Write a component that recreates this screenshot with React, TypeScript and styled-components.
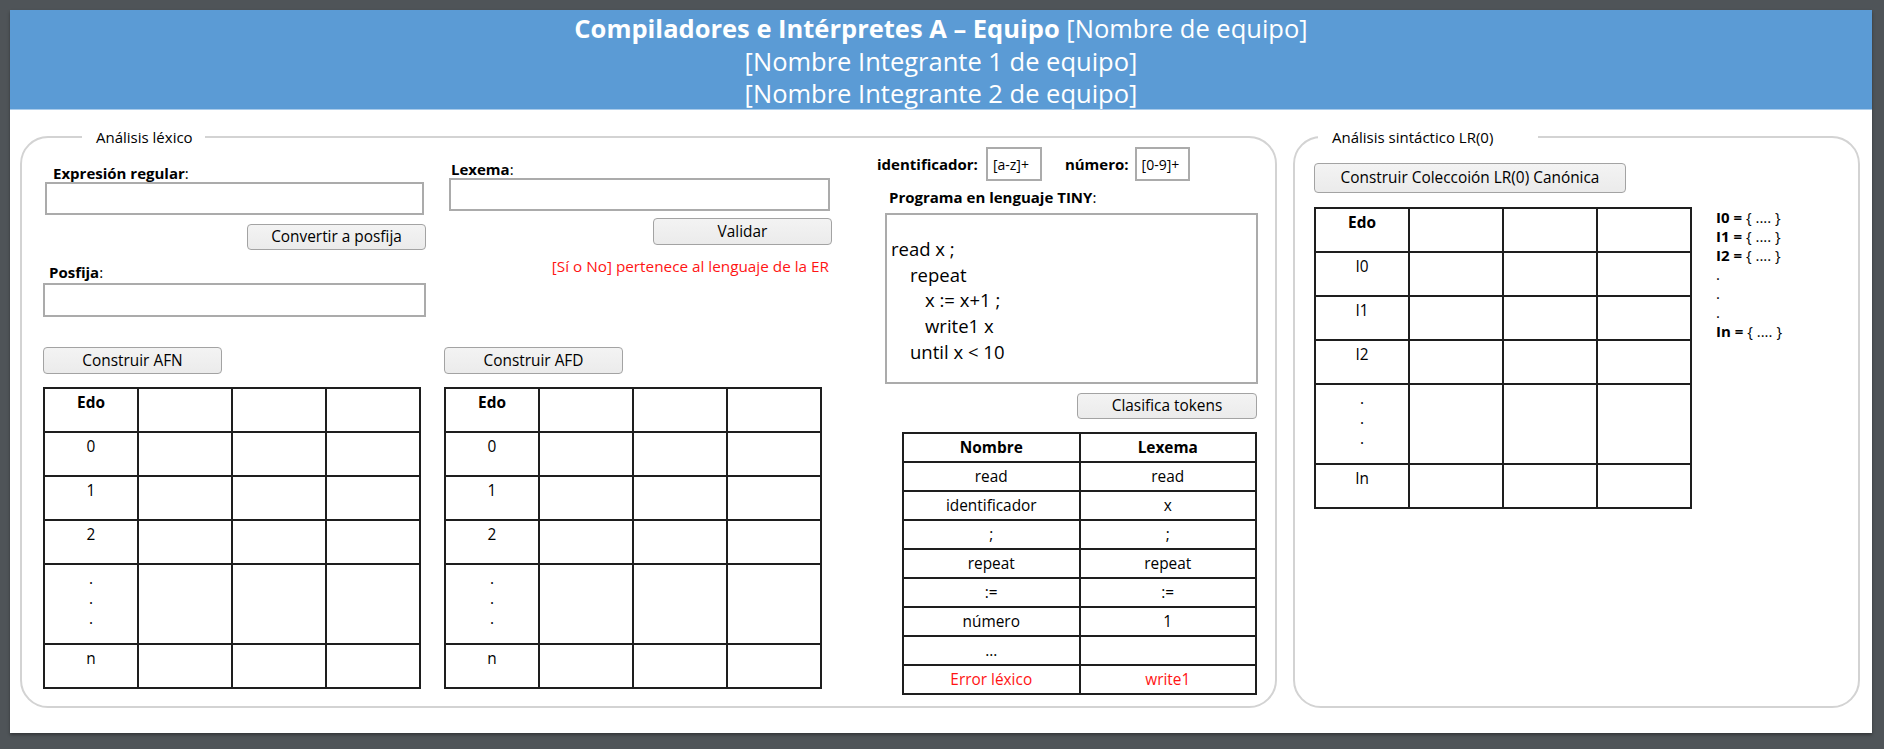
import React from "react";
import styled, { createGlobalStyle } from "styled-components";

const GlobalStyle = createGlobalStyle`
  html, body {
    margin: 0;
    padding: 0;
    overflow: hidden;
  }
  body {
    background: #4f5458;
    font-family: "Open Sans", "Noto Sans", sans-serif;
    color: #000;
  }
`;

const Screen = styled.div`
  padding: 10px 12px 16px 10px;
`;

const Page = styled.div`
  background: #fff;
  height: 723px;
  display: flex;
  flex-direction: column;
  box-shadow: 0 2px 3px rgba(0, 0, 0, 0.35);
`;

const Header = styled.header`
  box-sizing: border-box;
  height: 100px;
  padding-top: 2px;
  background: #5b9bd5;
  border-bottom: 1px solid #a9cbea;
  color: #fff;
  text-align: center;
  font-size: 25.5px;
  line-height: 32.5px;
`;

const HeaderLine = styled.div`
  white-space: nowrap;
`;

const Main = styled.main`
  flex: 1;
  display: flex;
  gap: 16px;
  padding: 18px 12px 25px 10px;
  min-height: 0;
`;

const Panel = styled.fieldset<{ $width?: number }>`
  margin: 0;
  padding: 0;
  min-width: 0;
  border: 2px solid #d3d3d3;
  border-radius: 28px;
  flex: ${(p) => (p.$width ? `0 0 ${p.$width}px` : "1 1 auto")};
  box-sizing: border-box;
`;

const Legend = styled.legend<{ $offset: number; $padRight: number }>`
  margin-left: ${(p) => p.$offset}px;
  padding: 0 ${(p) => p.$padRight}px 0 14px;
  font-size: 15px;
  line-height: 18px;
`;

const LexBody = styled.div`
  display: flex;
  padding: 0 17px 0 21px;
`;

const Column = styled.div<{ $width: number; $gap?: number }>`
  flex: 0 0 ${(p) => p.$width}px;
  margin-left: ${(p) => p.$gap ?? 0}px;
  display: flex;
  flex-direction: column;
`;

const FormArea = styled.div<{ $pad: number }>`
  box-sizing: border-box;
  height: 201px;
  padding-top: ${(p) => p.$pad}px;
  display: flex;
  flex-direction: column;
`;

const FieldLabel = styled.label<{ $indent: number; $space?: number }>`
  display: block;
  font-size: 15px;
  line-height: 18px;
  padding-left: ${(p) => p.$indent}px;
  margin-top: ${(p) => p.$space ?? 0}px;
  white-space: nowrap;
  b {
    font-weight: 700;
  }
`;

const TextInput = styled.input<{ $h: number; $inset?: number; $space?: number }>`
  box-sizing: border-box;
  display: block;
  height: ${(p) => p.$h}px;
  width: ${(p) => (p.$inset ? `calc(100% - ${p.$inset + 2}px)` : "100%")};
  margin: ${(p) => p.$space ?? 0}px 0 0 ${(p) => p.$inset ?? 0}px;
  border: 2px solid #ababab;
  background: #fff;
  font-family: inherit;
  font-size: 15px;
  padding: 0 6px;
  outline: none;
`;

const ActionButton = styled.button<{
  $w: number;
  $h: number;
  $space?: number;
  $end?: boolean;
  $right?: number;
}>`
  box-sizing: border-box;
  width: ${(p) => p.$w}px;
  height: ${(p) => p.$h}px;
  margin-top: ${(p) => p.$space ?? 0}px;
  margin-right: ${(p) => p.$right ?? 0}px;
  align-self: ${(p) => (p.$end ? "flex-end" : "flex-start")};
  border: 1px solid #a3a3a3;
  border-radius: 4px;
  background: linear-gradient(#f3f3f3, #ebebeb);
  font-family: inherit;
  font-size: 15.4px;
  line-height: 18px;
  color: #000;
  padding: 0;
  cursor: pointer;
`;

const ResultText = styled.div`
  margin-top: 12px;
  padding-right: 3px;
  text-align: right;
  color: #ff1414;
  font-size: 15.3px;
  line-height: 18px;
  white-space: nowrap;
`;

const StateTable = styled.table<{ $space?: number }>`
  border-collapse: collapse;
  table-layout: fixed;
  width: 378px;
  margin-top: ${(p) => p.$space ?? 0}px;
  flex: none;
`;

const StateRow = styled.tr<{ $h: number }>`
  height: ${(p) => p.$h}px;
`;

const StateCell = styled.td<{ $bold?: boolean }>`
  border: 2px solid #1e1e1e;
  text-align: center;
  vertical-align: top;
  padding: 4px 0 0;
  font-size: 15.4px;
  line-height: 20px;
  font-weight: ${(p) => (p.$bold ? 700 : 400)};
`;

const RegexRow = styled.div`
  display: flex;
  align-items: center;
  height: 34px;
  margin-top: 1px;
`;

const RegexLabel = styled.span<{ $space?: number }>`
  font-weight: 700;
  font-size: 15px;
  margin-left: ${(p) => p.$space ?? 0}px;
  white-space: nowrap;
`;

const RegexBox = styled.span<{ $w: number; $space: number }>`
  box-sizing: border-box;
  width: ${(p) => p.$w}px;
  height: 34px;
  margin-left: ${(p) => p.$space}px;
  border: 2px solid #ababab;
  padding-left: 5px;
  display: flex;
  align-items: center;
  font-size: 14px;
  white-space: nowrap;
`;

const CodeBox = styled.div`
  box-sizing: border-box;
  margin: 7px 0 0 8px;
  height: 171px;
  border: 2px solid #ababab;
  padding: 21px 4px 0;
  font-size: 18.5px;
  line-height: 25.7px;
`;

const CodeLine = styled.div<{ $indent: number }>`
  padding-left: ${(p) => p.$indent}px;
  white-space: pre;
`;

const TokenTable = styled.table`
  border-collapse: collapse;
  table-layout: fixed;
  width: 355px;
  margin-top: 13px;
  margin-right: 1px;
  align-self: flex-end;
`;

const TokenRow = styled.tr`
  height: 29px;
`;

const TokenCell = styled.td<{ $bold?: boolean; $error?: boolean }>`
  border: 2px solid #1e1e1e;
  text-align: center;
  vertical-align: middle;
  padding: 0;
  font-size: 15.4px;
  line-height: 20px;
  font-weight: ${(p) => (p.$bold ? 700 : 400)};
  color: ${(p) => (p.$error ? "#ff1414" : "#000")};
`;

const SynBody = styled.div`
  display: flex;
  flex-direction: column;
  padding-left: 19px;
`;

const SynRow = styled.div`
  display: flex;
  align-items: flex-start;
  gap: 24px;
  margin-top: 14px;
`;

const SetList = styled.div`
  font-size: 15px;
  line-height: 19px;
  padding-top: 1px;
  white-space: nowrap;
  b {
    font-weight: 700;
  }
`;

const stateRows = ["0", "1", "2", "dots", "n"];
const lrRows = ["I0", "I1", "I2", "dots", "In"];

function EdoTable({ rows, space }: { rows: string[]; space?: number }) {
  return (
    <StateTable $space={space}>
      <tbody>
        <StateRow $h={44}>
          <StateCell $bold>Edo</StateCell>
          <StateCell />
          <StateCell />
          <StateCell />
        </StateRow>
        {rows.map((r, i) => (
          <StateRow key={i} $h={r === "dots" ? 80 : 44}>
            <StateCell>
              {r === "dots" ? (
                <>
                  .<br />.<br />.
                </>
              ) : (
                r
              )}
            </StateCell>
            <StateCell />
            <StateCell />
            <StateCell />
          </StateRow>
        ))}
      </tbody>
    </StateTable>
  );
}

const tokens: { name: string; lex: string; error?: boolean }[] = [
  { name: "read", lex: "read" },
  { name: "identificador", lex: "x" },
  { name: ";", lex: ";" },
  { name: "repeat", lex: "repeat" },
  { name: ":=", lex: ":=" },
  { name: "número", lex: "1" },
  { name: "...", lex: "" },
  { name: "Error léxico", lex: "write1", error: true },
];

const code: { text: string; indent: number }[] = [
  { text: "read x ;", indent: 0 },
  { text: "repeat", indent: 19 },
  { text: "x := x+1 ;", indent: 34 },
  { text: "write1 x", indent: 34 },
  { text: "until x < 10", indent: 19 },
];

const sets = ["I0", "I1", "I2", ".", ".", ".", "In"];

export default function App() {
  return (
    <>
      <GlobalStyle />
      <Screen>
        <Page>
          <Header>
            <HeaderLine>
              <b>Compiladores e Intérpretes A – Equipo</b> [Nombre de equipo]
            </HeaderLine>
            <HeaderLine>[Nombre Integrante 1 de equipo]</HeaderLine>
            <HeaderLine>[Nombre Integrante 2 de equipo]</HeaderLine>
          </Header>
          <Main>
            <Panel $width={1257}>
              <Legend $offset={60} $padRight={12}>
                Análisis léxico
              </Legend>
              <LexBody>
                <Column $width={383}>
                  <FormArea $pad={18}>
                    <FieldLabel $indent={10}>
                      <b>Expresión regular</b>:
                    </FieldLabel>
                    <TextInput $h={33} $inset={2} />
                    <ActionButton $w={179} $h={26} $space={9} $end>
                      Convertir a posfija
                    </ActionButton>
                    <FieldLabel $indent={6} $space={13}>
                      <b>Posfija</b>:
                    </FieldLabel>
                    <TextInput $h={34} $space={2} />
                  </FormArea>
                  <ActionButton $w={179} $h={27}>
                    Construir AFN
                  </ActionButton>
                  <EdoTable rows={stateRows} space={13} />
                </Column>
                <Column $width={388} $gap={18}>
                  <FormArea $pad={14}>
                    <FieldLabel $indent={7}>
                      <b>Lexema</b>:
                    </FieldLabel>
                    <TextInput $h={33} $inset={5} />
                    <ActionButton $w={179} $h={27} $space={7} $end>
                      Validar
                    </ActionButton>
                    <ResultText>[Sí o No] pertenece al lenguaje de la ER</ResultText>
                  </FormArea>
                  <ActionButton $w={179} $h={27}>
                    Construir AFD
                  </ActionButton>
                  <EdoTable rows={stateRows} space={13} />
                </Column>
                <Column $width={381} $gap={45}>
                  <RegexRow>
                    <RegexLabel>identificador:</RegexLabel>
                    <RegexBox $w={56} $space={8}>
                      [a-z]+
                    </RegexBox>
                    <RegexLabel $space={23}>número:</RegexLabel>
                    <RegexBox $w={55} $space={6}>
                      [0-9]+
                    </RegexBox>
                  </RegexRow>
                  <FieldLabel $indent={12} $space={7}>
                    <b>Programa en lenguaje TINY</b>:
                  </FieldLabel>
                  <CodeBox>
                    {code.map((l, i) => (
                      <CodeLine key={i} $indent={l.indent}>
                        {l.text}
                      </CodeLine>
                    ))}
                  </CodeBox>
                  <ActionButton $w={180} $h={26} $space={9} $end $right={1}>
                    Clasifica tokens
                  </ActionButton>
                  <TokenTable>
                    <tbody>
                      <TokenRow>
                        <TokenCell $bold>Nombre</TokenCell>
                        <TokenCell $bold>Lexema</TokenCell>
                      </TokenRow>
                      {tokens.map((t, i) => (
                        <TokenRow key={i}>
                          <TokenCell $error={t.error}>{t.name}</TokenCell>
                          <TokenCell $error={t.error}>{t.lex}</TokenCell>
                        </TokenRow>
                      ))}
                    </tbody>
                  </TokenTable>
                </Column>
              </LexBody>
            </Panel>
            <Panel>
              <Legend $offset={23} $padRight={45}>
                Análisis sintáctico LR(0)
              </Legend>
              <SynBody>
                <ActionButton $w={312} $h={30} $space={17}>
                  Construir Coleccoión LR(0) Canónica
                </ActionButton>
                <SynRow>
                  <EdoTable rows={lrRows} />
                  <SetList>
                    {sets.map((s, i) =>
                      s === "." ? (
                        <div key={i}>.</div>
                      ) : (
                        <div key={i}>
                          <b>{s} =</b> {"{ .... }"}
                        </div>
                      )
                    )}
                  </SetList>
                </SynRow>
              </SynBody>
            </Panel>
          </Main>
        </Page>
      </Screen>
    </>
  );
}
